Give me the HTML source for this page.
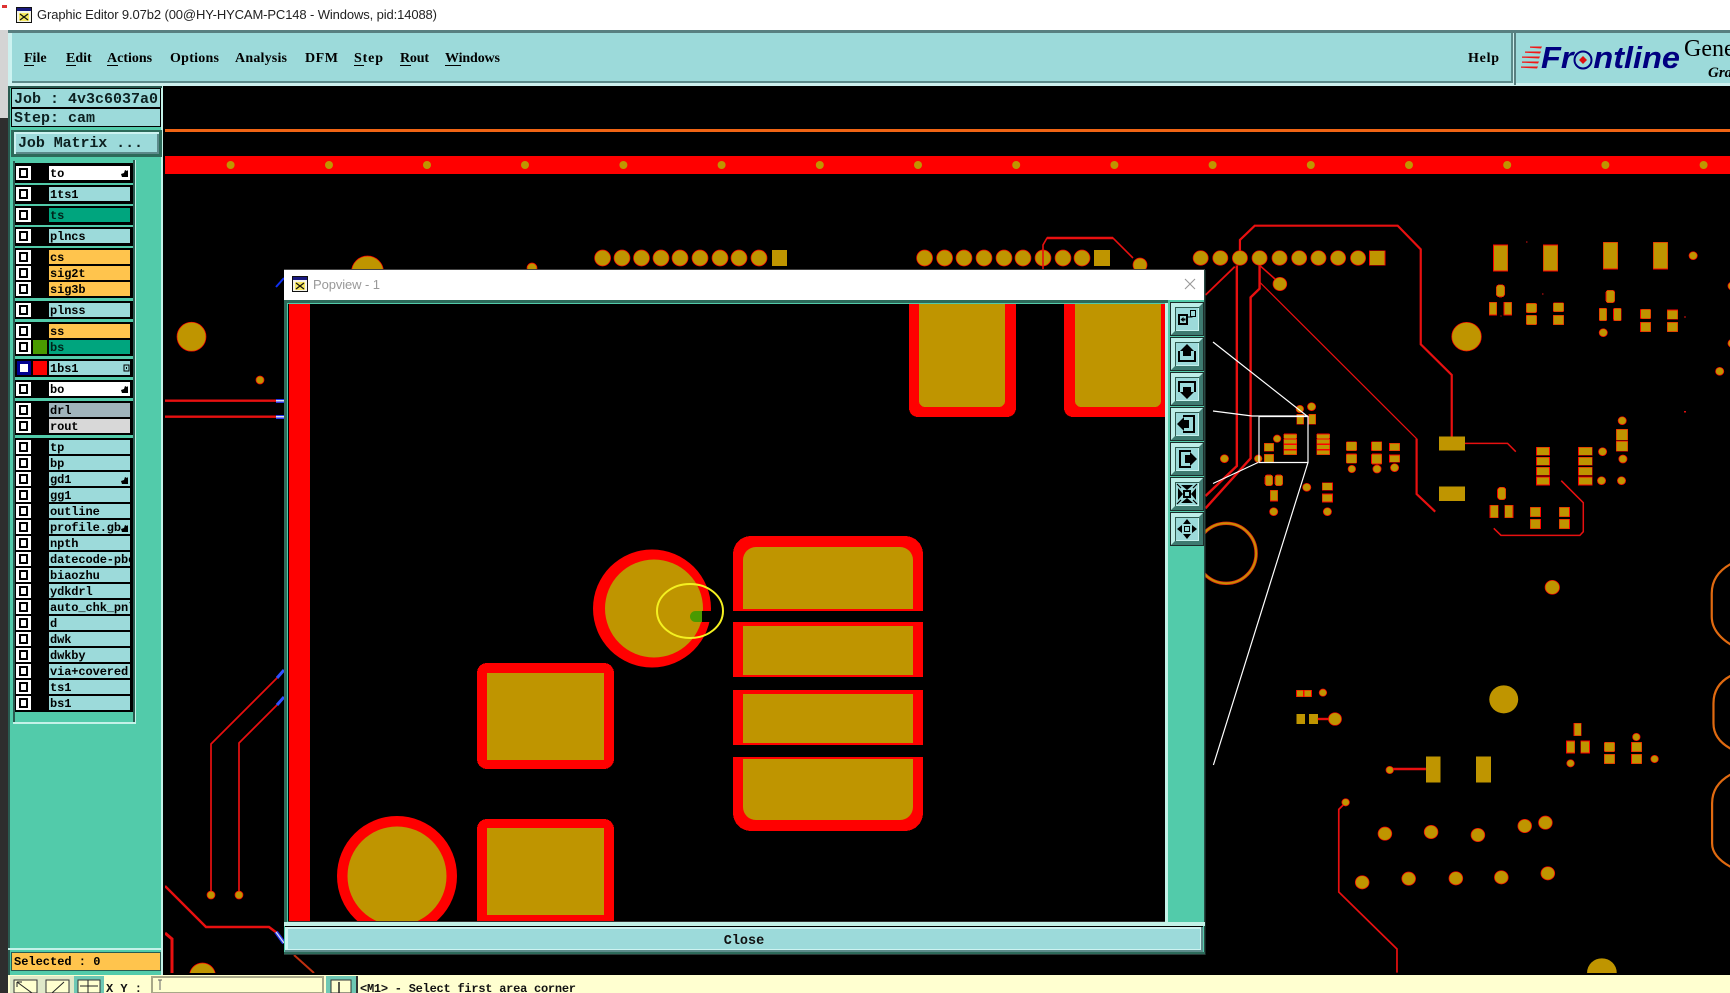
<!DOCTYPE html>
<html><head><meta charset="utf-8"><title>Graphic Editor</title>
<style>
html,body{margin:0;padding:0;background:#000;width:1730px;height:993px;overflow:hidden}
svg{display:block}
rect{shape-rendering:crispEdges}
.p{fill:#bf9500;stroke:#f00;stroke-width:.7;vector-effect:non-scaling-stroke}
.t{fill:none;stroke:#e81010;vector-effect:non-scaling-stroke}
.w{fill:none;stroke:#fff;stroke-width:1.2}
.m{font:bold 14px "Liberation Serif",serif;fill:#000}
.l{font:bold 12px "Liberation Mono",monospace;fill:#000;letter-spacing:-.1px}
.j{font:bold 15px "Liberation Mono",monospace;fill:#0c2020}
.i{fill:none;stroke:#000;stroke-width:2}
.f{fill:#000}
</style></head><body>
<svg width="1730" height="993" viewBox="0 0 1730 993" xmlns="http://www.w3.org/2000/svg">
<defs>
<g id="cb"><rect x="0" y="0" width="15" height="14" fill="#fff"/><rect x="3" y="2" width="9" height="10" fill="#000"/><rect x="5" y="4" width="5" height="6" fill="#fff"/></g>
<g id="ico"><rect width="16" height="16" fill="#111"/><rect x="1" y="1" width="14" height="14" fill="#f4f4e8"/><rect x="1" y="1" width="14" height="3" fill="#1a1a80"/><rect x="3" y="6" width="10" height="8" fill="#f6e860"/><path d="M4 7l8 6M12 7l-8 6" stroke="#111" stroke-width="1.2"/></g>
<g id="btn"><rect width="34" height="34" fill="#1c2c2a"/><rect x="1" y="1" width="32" height="32" fill="#3e7a70"/><path d="M1 1h32l-4 4H5v24l-4 4z" fill="#bdeee8"/><rect x="5" y="5" width="24" height="24" fill="#9cdada"/><path d="M5 5h24v1H6v23H5z" fill="#2d5a50"/><path d="M29 29H6v-1h22V6h1z" fill="#c8f2ee"/></g>
<clipPath id="v"><rect x="288" y="304" width="877" height="617"/></clipPath>
<clipPath id="c"><rect x="165" y="86" width="1565" height="887"/></clipPath>
</defs>

<!-- background -->
<rect width="1730" height="993" fill="#000"/>
<rect x="0" y="0" width="1730" height="30" fill="#fff"/>
<rect x="0" y="0" width="8" height="118" fill="#d4d4d4"/>
<rect x="0" y="0" width="8" height="30" fill="#fff"/>
<rect x="2" y="5" width="5" height="3" fill="#d33"/>
<rect x="0" y="118" width="8" height="875" fill="#2e2e2e"/>
<use href="#ico" x="16" y="7"/>
<text x="37" y="19" textLength="400" font-family="'Liberation Sans',sans-serif" font-size="13" fill="#222">Graphic Editor 9.07b2 (00@HY-HYCAM-PC148 - Windows, pid:14088)</text>

<!-- menu bar -->
<rect x="8" y="30" width="1722" height="56" fill="#cdf0ee"/>
<rect x="8" y="30" width="1722" height="3" fill="#587f80"/>
<rect x="10" y="33" width="1503" height="50" fill="#9cdada"/>
<rect x="10" y="33" width="2" height="50" fill="#cdf3f1"/>
<rect x="1511" y="33" width="2" height="50" fill="#5c8a8a"/>
<rect x="12" y="81" width="1500" height="2" fill="#5c8a8a"/>
<rect x="1515" y="33" width="215" height="50" fill="#9cdada"/>
<rect x="1514" y="30" width="2" height="55" fill="#587f80"/>
<text class="m" x="24" y="62">File</text><rect x="24" y="65" width="10" height="1"/>
<text class="m" x="66" y="62">Edit</text><rect x="66" y="65" width="10" height="1"/>
<text class="m" x="107" y="62">Actions</text><rect x="107" y="65" width="11" height="1"/>
<text class="m" x="170" y="62" textLength="49">Options</text>
<text class="m" x="235" y="62" textLength="52">Analysis</text>
<text class="m" x="305" y="62" textLength="33">DFM</text>
<text class="m" x="354" y="62" textLength="29">Step</text><rect x="354" y="65" width="10" height="1"/>
<text class="m" x="400" y="62" textLength="29">Rout</text><rect x="400" y="65" width="11" height="1"/>
<text class="m" x="445" y="62" textLength="55">Windows</text><rect x="445" y="65" width="16" height="1"/>
<text class="m" x="1468" y="62" textLength="31">Help</text>

<!-- logo -->
<g fill="#f01818"><path d="M1530 46.500h12l-1 2-11-.8z"/><path d="M1525 51.500h16l-1 2-15-.8z"/><path d="M1522 56.500h18l-1 2-17-.8z"/><path d="M1522 61.500h17l-1 2-16-.8z"/><path d="M1521 66.500h17l-1 2-16-.8z"/></g>
<text x="1541" y="68" textLength="139" lengthAdjust="spacingAndGlyphs" font-family="'Liberation Sans',sans-serif" font-weight="bold" font-style="italic" font-size="31" fill="#000080">Frontline</text>
<circle cx="1583" cy="60" r="10.5" fill="#9cdada"/>
<circle cx="1583" cy="60" r="8.5" fill="none" stroke="#000080" stroke-width="2"/>
<path d="M1583 56l4 4-4 4-4-4z" fill="#e01010"/>
<text x="1684" y="56" font-family="'Liberation Serif',serif" font-size="24" fill="#000">Gene</text>
<text x="1708" y="77" font-family="'Liberation Serif',serif" font-weight="bold" font-style="italic" font-size="15" fill="#000">Gra</text>

<!-- canvas -->
<g clip-path="url(#c)">
<rect x="165" y="129" width="1565" height="3" fill="#f06414"/>
<rect x="165" y="156" width="1565" height="18" fill="#f00"/>
<g fill="#bf9500">
<circle cx="230.6" cy="165" r="4"/><circle cx="329" cy="165" r="4"/><circle cx="427" cy="165" r="4"/><circle cx="525" cy="165" r="4"/><circle cx="623.4" cy="165" r="4"/><circle cx="721.6" cy="165" r="4"/><circle cx="819.8" cy="165" r="4"/><circle cx="918" cy="165" r="4"/><circle cx="1016.2" cy="165" r="4"/><circle cx="1114.4" cy="165" r="4"/><circle cx="1212.6" cy="165" r="4"/><circle cx="1310.8" cy="165" r="4"/><circle cx="1409" cy="165" r="4"/><circle cx="1507.2" cy="165" r="4"/><circle cx="1605.4" cy="165" r="4"/><circle cx="1703.6" cy="165" r="4"/>
</g>
<circle class="p" cx="191.5" cy="336.7" r="14.5"/>
<circle class="p" cx="260" cy="380" r="4"/>
<path d="M165 400.7H277M165 416.7H277" stroke="#e81010" stroke-width="2.4" fill="none"/>
<rect x="276" y="399" width="8" height="4" fill="#2838e8"/><rect x="276" y="400" width="8" height="1.5" fill="#dde"/>
<rect x="276" y="415" width="8" height="4" fill="#2838e8"/><rect x="276" y="416" width="8" height="1.5" fill="#dde"/>
<path d="M276 287L284 278" stroke="#1030f0" stroke-width="2"/>
<path d="M277 678L211 744V893" class="t" stroke-width="1.7"/>
<path d="M277 705L239 743V893" class="t" stroke-width="1.7"/>
<circle class="p" cx="211" cy="895" r="4"/><circle class="p" cx="239" cy="895" r="4"/>
<path d="M277 678L284 670M277 705L284 697" stroke="#3050ff" stroke-width="3"/>
<path d="M165 886L206 927H269L277 933" class="t" stroke-width="2.4"/>
<path d="M276 932L284 943" stroke="#2838e8" stroke-width="4"/><path d="M276 932L284 943" stroke="#dde" stroke-width="1.3"/>
<path d="M294 955L314 973" stroke="#c03010" stroke-width="2"/>
<path d="M165 933L172 939V973" class="t" stroke-width="3"/>
<circle class="p" cx="202.5" cy="976" r="13"/>
<circle class="p" cx="367.5" cy="272" r="16"/>
<circle class="p" cx="532" cy="268" r="5"/>

<!-- header rows -->
<g class="gr">
<circle class="p" cx="602.6" cy="258" r="8"/><circle class="p" cx="622" cy="258" r="8"/><circle class="p" cx="641.5" cy="258" r="8"/><circle class="p" cx="661" cy="258" r="8"/><circle class="p" cx="680" cy="258" r="8"/><circle class="p" cx="700" cy="258" r="8"/><circle class="p" cx="720" cy="258" r="8"/><circle class="p" cx="739" cy="258" r="8"/><circle class="p" cx="759" cy="258" r="8"/>
<rect x="772" y="250" width="15" height="16" fill="#bf9500"/>
<circle class="p" cx="924.6" cy="258" r="8"/><circle class="p" cx="944.6" cy="258" r="8"/><circle class="p" cx="964" cy="258" r="8"/><circle class="p" cx="984" cy="258" r="8"/><circle class="p" cx="1004" cy="258" r="8"/><circle class="p" cx="1023" cy="258" r="8"/><circle class="p" cx="1043" cy="258" r="8"/><circle class="p" cx="1063" cy="258" r="8"/><circle class="p" cx="1082" cy="258" r="8"/>
<rect x="1094" y="250" width="16" height="16" fill="#bf9500"/>
<path d="M1043 275V245L1047 238H1113L1133 258" class="t" stroke-width="1.6"/>
<path d="M1047 238H1113" stroke="#e81010" stroke-width="2.6"/>
<circle class="p" cx="1140" cy="265" r="7"/>
</g>

<!-- right area, traced in 2.904 x 3 space -->
<g transform="translate(1190 210) scale(.34439 .33333)">
<path class="t" stroke-width="2.2" d="M145 122V90L188 47H603L670 118V403L760 495V680"/>
<path class="t" stroke-width="2.4" d="M136 166V768L45 858"/>
<path class="t" stroke-width="1.8" d="M130 170L45 255"/>
<path class="t" stroke-width="2.4" d="M202 166V236L176 262V745L45 895"/>
<path class="t" stroke-width="1.6" d="M202 166L250 210"/>
<path class="t" stroke-width="1.2" d="M204 218L658 686"/>
<path class="t" stroke-width="2.2" d="M658 686V852L712 905"/>
<path class="t" stroke-width="1.5" d="M798 700H922L946 725"/>
<path class="t" stroke-width="1.5" d="M1078 812L1142 878V965L1132 976H903L882 955"/>
<circle class="p" cx="31" cy="144" r="22"/><circle class="p" cx="88" cy="144" r="22"/><circle class="p" cx="145" cy="144" r="22"/><circle class="p" cx="202" cy="144" r="22"/><circle class="p" cx="260" cy="144" r="22"/><circle class="p" cx="317" cy="144" r="22"/><circle class="p" cx="373" cy="144" r="22"/><circle class="p" cx="430" cy="144" r="22"/><circle class="p" cx="488" cy="144" r="22"/>
<rect class="p" x="521" y="122" width="45" height="44"/>
<circle class="p" cx="261" cy="222" r="20"/>
<circle class="p" cx="803" cy="380" r="43"/>
<rect class="p" x="881" y="105" width="42" height="78"/><rect class="p" x="1026" y="105" width="42" height="78"/><rect class="p" x="1200" y="97" width="42" height="80"/><rect class="p" x="1345" y="97" width="42" height="80"/>
<rect class="p" x="889" y="224" width="25" height="37" rx="10"/><rect class="p" x="869" y="277" width="22" height="38"/><rect class="p" x="912" y="277" width="22" height="38"/>
<rect class="p" x="976" y="280" width="31" height="28" rx="5"/><rect class="p" x="976" y="316" width="31" height="28" rx="3"/><rect class="p" x="1055" y="278" width="30" height="27" rx="3"/><rect class="p" x="1055" y="316" width="30" height="28"/>
<rect class="p" x="1208" y="241" width="25" height="37" rx="6"/><rect class="p" x="1188" y="295" width="22" height="37" rx="3"/><rect class="p" x="1230" y="295" width="22" height="37" rx="3"/>
<rect class="p" x="1308" y="298" width="30" height="28" rx="3"/><rect class="p" x="1308" y="337" width="30" height="28"/><rect class="p" x="1386" y="300" width="30" height="28"/><rect class="p" x="1386" y="337" width="30" height="28"/>
<circle class="p" cx="1200" cy="368" r="12"/><circle class="p" cx="1461" cy="137" r="12"/>
<g fill="#e01010"><rect x="976" y="94" width="4" height="4"/><rect x="1022" y="250" width="4" height="4"/><rect x="901" y="316" width="4" height="4"/><rect x="1435" y="319" width="5" height="4"/><rect x="1435" y="603" width="5" height="5"/></g>
<circle class="p" cx="1574" cy="228" r="12"/><circle class="p" cx="1574" cy="400" r="12"/><circle class="p" cx="1538" cy="484" r="12"/>
<circle class="p" cx="319" cy="597" r="11"/><circle class="p" cx="353" cy="590" r="12"/><rect class="p" x="310" y="613" width="20" height="30"/><rect class="p" x="345" y="613" width="20" height="30"/>
<circle class="p" cx="253" cy="686" r="11"/>
<rect class="p" x="272" y="672" width="38" height="14" rx="3"/><rect class="p" x="272" y="688" width="38" height="14"/><rect class="p" x="272" y="704" width="38" height="14"/><rect class="p" x="272" y="720" width="38" height="14"/>
<rect class="p" x="368" y="672" width="38" height="14" rx="3"/><rect class="p" x="368" y="688" width="38" height="14"/><rect class="p" x="368" y="704" width="38" height="14"/><rect class="p" x="368" y="720" width="38" height="14"/>
<rect class="p" x="216" y="700" width="27" height="24"/><rect class="p" x="216" y="733" width="27" height="24"/>
<circle class="p" cx="198" cy="746" r="11"/><circle class="p" cx="100" cy="746" r="12"/>
<rect class="p" x="454" y="695" width="30" height="27" rx="3"/><rect class="p" x="454" y="732" width="30" height="28" rx="3"/><circle class="p" cx="470" cy="777" r="11"/>
<rect class="p" x="527" y="695" width="30" height="27" rx="3"/><rect class="p" x="527" y="732" width="30" height="30" rx="3"/><circle class="p" cx="543" cy="777" r="12"/>
<rect class="p" x="579" y="700" width="30" height="22"/><rect class="p" x="579" y="735" width="30" height="22"/><circle class="p" cx="594" cy="773" r="12"/>
<rect fill="#bf9500" x="723" y="680" width="76" height="42"/><rect fill="#bf9500" x="723" y="829" width="76" height="44"/>
<rect class="p" x="1006" y="712" width="38" height="24"/><rect class="p" x="1006" y="742" width="38" height="24"/><rect class="p" x="1006" y="772" width="38" height="24"/><rect class="p" x="1006" y="801" width="38" height="24"/>
<rect class="p" x="1128" y="712" width="40" height="24"/><rect class="p" x="1128" y="742" width="40" height="24"/><rect class="p" x="1128" y="772" width="40" height="24"/><rect class="p" x="1128" y="801" width="40" height="24"/>
<circle class="p" cx="1198" cy="725" r="12"/><circle class="p" cx="1195" cy="812" r="12"/><circle class="p" cx="1253" cy="812" r="12"/><circle class="p" cx="1257" cy="747" r="12"/><circle class="p" cx="1255" cy="632" r="12"/>
<rect class="p" x="1238" y="658" width="33" height="33"/><rect class="p" x="1238" y="694" width="33" height="30"/>
<rect class="p" x="893" y="832" width="24" height="37" rx="8"/><rect class="p" x="871" y="886" width="24" height="37"/><rect class="p" x="914" y="886" width="24" height="37"/>
<rect class="p" x="988" y="892" width="30" height="28"/><rect class="p" x="988" y="928" width="30" height="28"/><rect class="p" x="1072" y="892" width="30" height="28"/><rect class="p" x="1072" y="928" width="30" height="28"/>
<rect class="p" x="218" y="795" width="22" height="32" rx="6"/><rect class="p" x="247" y="795" width="22" height="32" rx="6"/><rect class="p" x="233" y="841" width="22" height="32"/>
<circle class="p" cx="243" cy="905" r="12"/><circle class="p" cx="339" cy="832" r="12"/>
<rect class="p" x="384" y="818" width="30" height="23"/><rect class="p" x="384" y="852" width="30" height="24"/><circle class="p" cx="399" cy="905" r="12"/>
<ellipse cx="105" cy="1030" rx="87" ry="90" fill="none" stroke="#e03010" stroke-width="3.400" vector-effect="non-scaling-stroke"/>
<ellipse cx="105" cy="1030" rx="87" ry="90" fill="none" stroke="#c89000" stroke-width="1.800" vector-effect="non-scaling-stroke"/>
<circle class="p" cx="1052" cy="1132" r="21" stroke="none"/>
</g>

<g transform="translate(1190 600) scale(.34439 .33333)">
<rect class="p" x="309" y="271" width="20" height="19"/><rect class="p" x="331" y="271" width="22" height="19"/><circle class="p" cx="386" cy="278" r="11"/>
<rect fill="#bf9500" x="309" y="342" width="25" height="30"/><rect fill="#bf9500" x="345" y="342" width="26" height="30"/>
<path d="M371 357H405" class="t" stroke-width="2.4"/><circle class="p" cx="421" cy="357" r="19"/>
<circle fill="#bf9500" cx="911" cy="298" r="42"/>
<rect class="p" x="1115" y="370" width="21" height="37"/><rect class="p" x="1093" y="423" width="24" height="36"/><rect class="p" x="1135" y="423" width="25" height="36"/>
<rect class="p" x="1203" y="427" width="30" height="28" rx="3"/><rect class="p" x="1203" y="463" width="30" height="28"/><rect class="p" x="1282" y="427" width="30" height="28"/><rect class="p" x="1282" y="463" width="30" height="28"/>
<circle class="p" cx="1296" cy="411" r="11"/><circle class="p" cx="1349" cy="477" r="11"/><circle class="p" cx="1105" cy="490" r="11"/>
<circle class="p" cx="580" cy="510" r="11"/><path d="M590 507H685" class="t" stroke-width="2.4"/>
<rect fill="#bf9500" x="685" y="469" width="43" height="78"/><rect fill="#bf9500" x="831" y="469" width="43" height="78"/>
<circle class="p" cx="452" cy="607" r="11"/>
<path class="t" stroke-width="1.7" d="M445 615L432 628V876L601 1047V1118"/>
<circle class="p" cx="566" cy="701" r="20"/><circle class="p" cx="700" cy="696" r="20"/><circle class="p" cx="836" cy="705" r="20"/><circle class="p" cx="972" cy="678" r="20"/><circle class="p" cx="1032" cy="668" r="20"/><circle class="p" cx="500" cy="847" r="20"/><circle class="p" cx="635" cy="836" r="20"/><circle class="p" cx="772" cy="835" r="20"/><circle class="p" cx="904" cy="832" r="20"/><circle class="p" cx="1039" cy="820" r="20"/>
<circle fill="#bf9500" cx="1196" cy="1118" r="43"/>
<g fill="none" stroke="#e06a10" stroke-width="2.200">
<path vector-effect="non-scaling-stroke" d="M1600 -122Q1515 -90 1515 -20V50Q1515 110 1600 150"/>
<path vector-effect="non-scaling-stroke" d="M1600 215Q1520 240 1520 310V370Q1520 430 1600 460"/>
<path vector-effect="non-scaling-stroke" d="M1600 510Q1516 540 1516 610V730Q1516 780 1600 815"/>
</g>
</g>

<path class="w" d="M1213 342L1307 416M1213 411L1252 416H1308M1259 416.500H1308V462.500H1259ZM1213 483.500L1258 462.500M1308 462.500L1213.400 765"/>
</g>
<rect x="165" y="973" width="1565" height="3" fill="#000"/>

<!-- left panel -->
<rect x="8" y="86" width="155" height="889" fill="#52cbaa"/>
<rect x="8" y="86" width="2" height="889" fill="#2a5a50"/>
<rect x="161" y="86" width="2" height="889" fill="#c4f2e8"/>
<rect x="163" y="86" width="2" height="889" fill="#000"/>
<rect x="10" y="86" width="152" height="2" fill="#2a5a50"/>
<rect x="11" y="88" width="150" height="39" fill="#000"/>
<rect x="12" y="89" width="148" height="18" fill="#9cdada"/>
<rect x="12" y="109" width="148" height="17" fill="#9cdada"/>
<text class="j" x="14" y="103" textLength="144">Job : 4v3c6037a0</text>
<text class="j" x="14" y="122">Step: cam</text>
<rect x="11" y="130" width="151" height="27" fill="#2d6a5a"/>
<rect x="14" y="132" width="145" height="22" fill="#cdf3f1"/>
<rect x="16" y="134" width="143" height="20" fill="#5c8a8a"/>
<rect x="16" y="134" width="141" height="18" fill="#9cdada"/>
<text class="j" x="18" y="147" textLength="125">Job Matrix ...</text>

<!-- layer list -->
<rect x="13" y="160" width="122" height="563" fill="#52cbaa"/>
<rect x="13" y="161" width="2" height="562" fill="#2a5a50"/>
<rect x="133" y="160" width="2" height="564" fill="#2a5a50"/>
<rect x="135" y="160" width="1" height="564" fill="#c4f2e8"/>
<rect x="13" y="722" width="123" height="2" fill="#c4f2e8"/>
<g fill="#000">
<rect x="15" y="163" width="118" height="20"/><rect x="15" y="185" width="118" height="19"/><rect x="15" y="206" width="118" height="19"/><rect x="15" y="227" width="118" height="19"/><rect x="15" y="248" width="118" height="50"/><rect x="15" y="301" width="118" height="18"/><rect x="15" y="322" width="118" height="34"/><rect x="15" y="359" width="118" height="18"/><rect x="15" y="380" width="118" height="18"/><rect x="15" y="401" width="118" height="34"/><rect x="15" y="438" width="118" height="274"/>
</g>
<!-- labels -->
<rect x="49" y="166" width="81" height="14" fill="#fff"/>
<rect x="49" y="187" width="81" height="14" fill="#9cdada"/>
<rect x="49" y="208" width="81" height="14" fill="#00a57e"/>
<rect x="49" y="229" width="81" height="14" fill="#9cdada"/>
<rect x="49" y="250" width="81" height="14" fill="#ffc44d"/>
<rect x="49" y="266" width="81" height="14" fill="#ffc44d"/>
<rect x="49" y="282" width="81" height="14" fill="#ffc44d"/>
<rect x="49" y="303" width="81" height="14" fill="#9cdada"/>
<rect x="49" y="324" width="81" height="14" fill="#ffc44d"/>
<rect x="49" y="340" width="81" height="14" fill="#00a57e"/>
<rect x="49" y="361" width="81" height="14" fill="#9cdada"/>
<rect x="49" y="382" width="81" height="14" fill="#fff"/>
<rect x="49" y="403" width="81" height="14" fill="#a0b4bc"/>
<rect x="49" y="419" width="81" height="14" fill="#d8d8d8"/>
<g fill="#9cdada">
<rect x="49" y="440" width="81" height="14"/><rect x="49" y="456" width="81" height="14"/><rect x="49" y="472" width="81" height="14"/><rect x="49" y="488" width="81" height="14"/><rect x="49" y="504" width="81" height="14"/><rect x="49" y="520" width="81" height="14"/><rect x="49" y="536" width="81" height="14"/><rect x="49" y="552" width="81" height="14"/><rect x="49" y="568" width="81" height="14"/><rect x="49" y="584" width="81" height="14"/><rect x="49" y="600" width="81" height="14"/><rect x="49" y="616" width="81" height="14"/><rect x="49" y="632" width="81" height="14"/><rect x="49" y="648" width="81" height="14"/><rect x="49" y="664" width="81" height="14"/><rect x="49" y="680" width="81" height="14"/><rect x="49" y="696" width="81" height="14"/>
</g>
<g>
<text class="l" x="50" y="177">to</text><text class="l" x="50" y="198">1ts1</text><text class="l" x="50" y="219" style="fill:#00241a">ts</text><text class="l" x="50" y="240">plncs</text>
<text class="l" x="50" y="261">cs</text><text class="l" x="50" y="277">sig2t</text><text class="l" x="50" y="293">sig3b</text>
<text class="l" x="50" y="314">plnss</text><text class="l" x="50" y="335">ss</text><text class="l" x="50" y="351" style="fill:#00241a">bs</text>
<text class="l" x="50" y="372">1bs1</text><text class="l" x="50" y="393">bo</text><text class="l" x="50" y="414">drl</text><text class="l" x="50" y="430">rout</text>
<text class="l" x="50" y="451">tp</text><text class="l" x="50" y="467">bp</text><text class="l" x="50" y="483">gd1</text><text class="l" x="50" y="499">gg1</text><text class="l" x="50" y="515">outline</text><text class="l" x="50" y="531">profile.gb</text><text class="l" x="50" y="547">npth</text><text class="l" x="50" y="563">datecode-pbe</text><text class="l" x="50" y="579">biaozhu</text><text class="l" x="50" y="595">ydkdrl</text><text class="l" x="50" y="611">auto_chk_pnl</text><text class="l" x="50" y="627">d</text><text class="l" x="50" y="643">dwk</text><text class="l" x="50" y="659">dwkby</text><text class="l" x="50" y="675">via+covered</text><text class="l" x="50" y="691">ts1</text><text class="l" x="50" y="707">bs1</text>
</g>
<rect x="130" y="440" width="3" height="272" fill="#000"/>
<rect x="133" y="440" width="2" height="272" fill="#2a5a50"/>
<!-- hand glyphs -->
<g class="f">
<path d="M121 174l3-1 1-3 2 1 1-1 0 2 0 5-6 0z"/><path d="M121 390l3-1 1-3 2 1 1-1 0 2 0 5-6 0z"/><path d="M121 481l3-1 1-3 2 1 1-1 0 2 0 5-6 0z"/><path d="M121 529l3-1 1-3 2 1 1-1 0 2 0 5-6 0z"/>
</g>
<rect x="124" y="365" width="5" height="6" fill="none" stroke="#000"/><rect x="126" y="367" width="1" height="2" fill="#000"/>
<!-- checkboxes -->
<use href="#cb" x="16" y="166"/><use href="#cb" x="16" y="187"/><use href="#cb" x="16" y="208"/><use href="#cb" x="16" y="229"/><use href="#cb" x="16" y="250"/><use href="#cb" x="16" y="266"/><use href="#cb" x="16" y="282"/><use href="#cb" x="16" y="303"/><use href="#cb" x="16" y="324"/><use href="#cb" x="16" y="340"/><use href="#cb" x="16" y="382"/><use href="#cb" x="16" y="403"/><use href="#cb" x="16" y="419"/><use href="#cb" x="16" y="440"/><use href="#cb" x="16" y="456"/><use href="#cb" x="16" y="472"/><use href="#cb" x="16" y="488"/><use href="#cb" x="16" y="504"/><use href="#cb" x="16" y="520"/><use href="#cb" x="16" y="536"/><use href="#cb" x="16" y="552"/><use href="#cb" x="16" y="568"/><use href="#cb" x="16" y="584"/><use href="#cb" x="16" y="600"/><use href="#cb" x="16" y="616"/><use href="#cb" x="16" y="632"/><use href="#cb" x="16" y="648"/><use href="#cb" x="16" y="664"/><use href="#cb" x="16" y="680"/><use href="#cb" x="16" y="696"/>
<rect x="17" y="361" width="14" height="14" fill="#000090"/><rect x="20" y="364" width="8" height="8" fill="#fff"/>
<rect x="33" y="340" width="14" height="14" fill="#4a9a00"/>
<rect x="33" y="361" width="14" height="14" fill="#f00"/>
<!-- selected -->
<rect x="8" y="948" width="155" height="2" fill="#c4f2e8"/>
<rect x="11" y="952" width="150" height="19" fill="#2a5a50"/>
<rect x="12" y="953" width="148" height="17" fill="#ffc44d"/>
<text x="14" y="965" style="font:bold 12px 'Liberation Mono',monospace">Selected : 0</text>

<!-- bottom bar -->
<rect x="8" y="975" width="1722" height="18" fill="#ffffd0"/>
<rect x="10" y="976" width="32" height="17" fill="#dfe8c8"/><rect x="14" y="980" width="23" height="13" fill="#ffffd0" stroke="#333"/><path d="M17 982L32 993" stroke="#222" fill="none"/><path d="M17 982v5M17 982h5" stroke="#222"/>
<rect x="42" y="976" width="32" height="17" fill="#dfe8c8"/><rect x="46" y="980" width="23" height="13" fill="#ffffd0" stroke="#333"/><path d="M52 993L64 982" stroke="#222"/>
<rect x="74" y="976" width="30" height="17" fill="#6ec8b4"/><rect x="78" y="980" width="22" height="13" fill="#ffffd0" stroke="#333"/><path d="M80 986H98M88 980V993" stroke="#222"/>
<text x="106" y="992" style="font:bold 12px 'Liberation Mono',monospace" fill="#111">X Y :</text>
<rect x="152" y="977" width="171" height="16" fill="#ffffd0" stroke="#a8a888" stroke-width="2"/>
<path d="M160 980v10M158 980h4" stroke="#666" fill="none"/>
<rect x="326" y="976" width="30" height="17" fill="#6ec8b4"/><rect x="331" y="980" width="20" height="13" fill="#ffffd0" stroke="#333"/><path d="M339 982v11" stroke="#222" stroke-width="1.5"/>
<rect x="356" y="976" width="2" height="17" fill="#333"/>
<text x="360" y="992" style="font:bold 12px 'Liberation Mono',monospace" fill="#111" textLength="216">&lt;M1&gt; - Select first area corner</text>

<!-- popup -->
<rect x="284" y="269" width="921" height="686" fill="#52cbaa"/>
<rect x="284" y="269" width="921" height="31" fill="#fff"/>
<rect x="284" y="269" width="921" height="1" fill="#444"/>
<use href="#ico" x="292" y="276"/>
<text x="313" y="289" font-family="'Liberation Sans',sans-serif" font-size="13" fill="#999" textLength="67">Popview - 1</text>
<path d="M1185 279l10 10M1195 279l-10 10" stroke="#999" stroke-width="1.1"/>
<rect x="284" y="300" width="884" height="3" fill="#2d6a5a"/>
<rect x="284" y="300" width="3" height="622" fill="#2d6a5a"/>
<rect x="1204" y="270" width="1.500" height="685" fill="#2a4a44"/>
<rect x="288" y="304" width="877" height="617" fill="#000"/>
<rect x="1165" y="303" width="3" height="622" fill="#c4f2e8"/>
<rect x="288" y="921" width="877" height="1" fill="#333"/>
<g clip-path="url(#v)">
<rect x="289" y="300" width="21" height="630" fill="#f00"/>
<rect x="909" y="295" width="107" height="122" rx="9" fill="#f00"/><rect x="919" y="295" width="86" height="112" rx="6" fill="#bf9500"/>
<rect x="1064" y="295" width="110" height="122" rx="9" fill="#f00"/><rect x="1075" y="295" width="86" height="112" rx="6" fill="#bf9500"/>
<rect x="733" y="536" width="190" height="295" rx="18" fill="#f00"/>
<rect x="733" y="611" width="190" height="11" fill="#000"/><rect x="733" y="677" width="190" height="13" fill="#000"/><rect x="733" y="745" width="190" height="12" fill="#000"/>
<path d="M743 609V560a13 13 0 0 1 13-13h144a13 13 0 0 1 13 13v49z" fill="#bf9500"/>
<rect x="743" y="626" width="170" height="49" fill="#bf9500"/>
<rect x="743" y="694" width="170" height="49" fill="#bf9500"/>
<path d="M743 759h170v48a13 13 0 0 1-13 13H756a13 13 0 0 1-13-13z" fill="#bf9500"/>
<rect x="477" y="663" width="137" height="106" rx="10" fill="#f00"/><rect x="487" y="673" width="117" height="87" fill="#bf9500"/>
<rect x="477" y="819" width="137" height="120" rx="10" fill="#f00"/><rect x="487" y="828" width="117" height="87" fill="#bf9500"/>
<circle cx="397" cy="876" r="60" fill="#f00"/><circle cx="397" cy="876" r="49.500" fill="#bf9500"/>
<circle cx="652" cy="608.500" r="59" fill="#f00"/><circle cx="654" cy="608.500" r="49" fill="#bf9500"/>
<rect x="702" y="611" width="31" height="11" fill="#000"/>
<path d="M702 611h-6.500a5.500 5.500 0 0 0 0 11H702z" fill="#4a9a00"/>
<ellipse cx="690" cy="611" rx="33" ry="27" fill="none" stroke="#f4f020" stroke-width="2"/>
</g>

<!-- popup side buttons -->
<rect x="1168" y="300" width="36" height="632" fill="#52cbaa"/>
<use href="#btn" x="1170" y="302"/><use href="#btn" x="1170" y="337"/><use href="#btn" x="1170" y="372"/><use href="#btn" x="1170" y="407"/><use href="#btn" x="1170" y="442"/><use href="#btn" x="1170" y="477"/><use href="#btn" x="1170" y="512"/>
<!-- b1 -->
<g transform="translate(1170 302)">
<rect x="8" y="12" width="10" height="11" fill="#000"/><rect x="10" y="14" width="6" height="7" fill="#9cdada"/><path class="f" d="M10.500 17.500l3-2.500v1.500h2v2h-2v1.500z"/>
<rect x="20.500" y="8.500" width="5" height="6" fill="none" stroke="#000"/><path d="M18 15h4v-1" fill="none" stroke="#000"/>
</g>
<!-- b2 up -->
<g transform="translate(1170 337)">
<path class="i" d="M9 14v10h16v-10"/>
<path class="f" d="M17 7l7 7h-3v5h-8v-5h-3z"/>
</g>
<!-- b3 down -->
<g transform="translate(1170 372)">
<path class="i" d="M9 20v-10h16v10"/>
<path class="f" d="M17 27l-7-7h3v-5h8v5h3z"/>
</g>
<!-- b4 left -->
<g transform="translate(1170 407)">
<path class="i" d="M13 9h11v16h-11"/>
<path class="f" d="M7 17l7-7v3h5v8h-5v3z"/>
</g>
<!-- b5 right -->
<g transform="translate(1170 442)">
<path class="i" d="M21 9h-11v16h11"/>
<path class="f" d="M27 17l-7-7v3h-5v8h5v3z"/>
</g>
<!-- b6 in -->
<g transform="translate(1170 477)">
<rect class="i" x="14" y="14" width="6" height="6"/>
<path class="f" d="M11 8h12l-6 5zM11 26h12l-6-5zM8 11v12l5-6zM26 11v12l-5-6z"/>
<path d="M7 7l4 4M27 7l-4 4M7 27l4-4M27 27l-4-4" stroke="#000" stroke-width="1.200"/>
</g>
<!-- b7 out -->
<g transform="translate(1170 512)">
<rect x="14.500" y="14.500" width="5" height="5" fill="none" stroke="#000" stroke-width="1.400"/>
<path class="f" d="M17 7l-4 5h8zM17 27l-4-5h8zM7 17l5-4v8zM27 17l-5-4v8z"/>
</g>

<!-- close -->
<rect x="284" y="922" width="921" height="4" fill="#c4f2e8"/>
<rect x="285" y="926" width="918" height="1" fill="#000"/>
<rect x="285" y="927" width="918" height="25" fill="#5c8a8a"/>
<rect x="285" y="927" width="916" height="23" fill="#cdf3f1"/>
<rect x="288" y="929" width="912" height="20" fill="#9cdada"/>
<rect x="284" y="952" width="921" height="2" fill="#2d6a5a"/>
<text x="744" y="944" text-anchor="middle" style="font:bold 13.500px 'Liberation Mono',monospace" fill="#111">Close</text>
<rect x="284" y="954" width="921" height="1" fill="#2a3a38"/>
</svg>
</body></html>
